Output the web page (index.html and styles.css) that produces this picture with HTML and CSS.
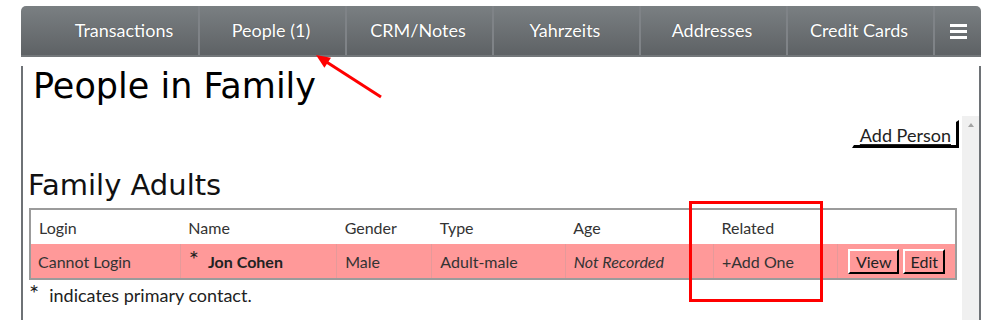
FILE: index.html
```html
<!DOCTYPE html>
<html>
<head>
<meta charset="utf-8">
<link rel="stylesheet" href="styles.css">
</head>
<body>
<div class="frame">
  <nav class="tabs">
    <div class="tab">Transactions</div>
    <div class="tab">People (1)</div>
    <div class="tab">CRM/Notes</div>
    <div class="tab">Yahrzeits</div>
    <div class="tab">Addresses</div>
    <div class="tab">Credit Cards</div>
    <div class="tab menu"><span class="burger"><i></i><i></i><i></i></span></div>
  </nav>
  <div class="panel">
    <h1 class="title">People in Family</h1>
    <div class="scroll-area">
      <div class="main">
        <div class="actions"><a class="btn-add">Add Person</a></div>
        <h2 class="subtitle">Family Adults</h2>
        <table class="people">
          <colgroup>
            <col class="c-login"><col class="c-name"><col class="c-gender"><col class="c-type"><col class="c-age"><col class="c-related"><col class="c-actions">
          </colgroup>
          <thead>
            <tr><th>Login</th><th>Name</th><th>Gender</th><th>Type</th><th>Age</th><th>Related</th><th></th></tr>
          </thead>
          <tbody>
            <tr class="row-pink">
              <td>Cannot Login</td>
              <td><span class="star">*</span><b>Jon Cohen</b></td>
              <td>Male</td>
              <td>Adult-male</td>
              <td><i>Not Recorded</i></td>
              <td>+Add One</td>
              <td class="btns"><span class="btn">View</span><span class="btn">Edit</span></td>
            </tr>
          </tbody>
        </table>
        <p class="note"><span class="star note-star">*</span>indicates primary contact.</p>
      </div>
      <div class="scrollbar"><span class="up"></span></div>
    </div>
  </div>
</div>
<svg class="annot" width="1000" height="320" viewBox="0 0 1000 320">
  <rect x="690.5" y="202.5" width="131" height="98" fill="none" stroke="#ff0000" stroke-width="3"/>
  <line x1="381" y1="97" x2="325" y2="61" stroke="#ff0000" stroke-width="3"/>
  <polygon points="316,55 331,57.7 324.4,67.7" fill="#ff0000"/>
</svg>
</body>
</html>
```
FILE: styles.css
```css
* { box-sizing: border-box; }
html, body { margin: 0; padding: 0; background: #fff; }
body { font-family: Lato, "Liberation Sans", sans-serif; color: #333; position: relative; width: 1000px; height: 320px; overflow: hidden; }

.frame { margin: 6px 0 0 21px; width: 960px; }

.tabs {
  display: flex;
  height: 51px;
  padding-left: 32px;
  border-radius: 5px 5px 0 0;
  background: linear-gradient(#7a7f82, #5e6265);
  border-bottom: 2px solid #73777a;
}
.tab {
  width: 147px;
  border-right: 2px solid #7f8387;
  color: #fff;
  font-size: 18px;
  text-align: center;
  line-height: 49px;
  padding-right: 3px;
  text-shadow: 0 0 1px rgba(0,0,0,0.35);
}
.tab.menu { width: auto; flex: 1; border-right: 0; padding-right: 0; display: flex; align-items: center; justify-content: center; }
.burger { display: flex; flex-direction: column; gap: 3.5px; width: 17px; margin-top: 2px; }
.burger i { display: block; height: 2.5px; background: #fff; }

.panel {
  border-left: 2px solid #6e7276;
  border-right: 2px solid #6e7276;
  height: 280px;
}
.title {
  margin: 9px 0 10px 10px;
  font-family: "DejaVu Sans", sans-serif;
  font-weight: normal;
  font-size: 35px;
  line-height: 40px;
  color: #000;
}
.scroll-area { display: flex; height: 220px; }
.main { flex: 1; padding: 4px 3px 0 6px; }
.scrollbar { width: 17px; background: #f0f0f0; display: flex; justify-content: center; padding-top: 7px; }
.up { width: 0; height: 0; border-left: 3.5px solid transparent; border-right: 3.5px solid transparent; border-bottom: 4px solid #a3a3a3; }

.actions { display: flex; justify-content: flex-end; }
.btn-add {
  display: inline-block;
  height: 28px;
  padding: 1px 5px 0 6px;
  font-size: 18px;
  line-height: 24px;
  color: #222;
  text-decoration: underline;
  text-underline-offset: 2px;
  border-top: 2px solid #fff;
  border-left: 2px solid #fff;
  border-right: 3px solid #000;
  border-bottom: 3px solid #000;
}

.subtitle {
  margin: 20px 0 6px -1px;
  font-family: "DejaVu Sans", sans-serif;
  font-weight: normal;
  font-size: 29px;
  line-height: 34px;
  color: #111;
}

.people {
  width: 928px;
  border: 2px solid #9b9b9b;
  border-collapse: collapse;
  table-layout: fixed;
  font-size: 16px;
}
.c-login { width: 150px; }
.c-name { width: 156px; }
.c-gender { width: 95px; }
.c-type { width: 133px; }
.c-age { width: 148px; }
.c-related { width: 124px; }
.c-actions { width: 118px; }
.people th { font-weight: normal; text-align: left; height: 35px; padding: 0 0 0 8px; color: #333; }
.people td { height: 35px; padding: 0 0 0 8px; border-left: 1px solid #e59a9a; color: #333; white-space: nowrap; }
.people td:first-child { border-left: 0; padding-left: 7px; }
.row-pink { background: #ff9999; }
.people b { color: #222; }
.star { font-size: 24px; line-height: 0; margin-right: 9px; color: #222; }
.people td.btns { text-align: right; padding: 0 10px 0 0; }
.btn {
  display: inline-block;
  height: 25px;
  padding: 0 5px 0 6px;
  margin-left: 4px;
  font-size: 16px;
  line-height: 21px;
  color: #222;
  border-top: 2px solid #fff;
  border-left: 2px solid #fff;
  border-right: 2px solid #000;
  border-bottom: 2px solid #000;
  vertical-align: middle;
}

.note { margin: 5px 0 0 0; font-size: 18px; line-height: 20px; color: #222; }
.note-star { margin-right: 10px; }

.annot { position: absolute; left: 0; top: 0; pointer-events: none; }
```
